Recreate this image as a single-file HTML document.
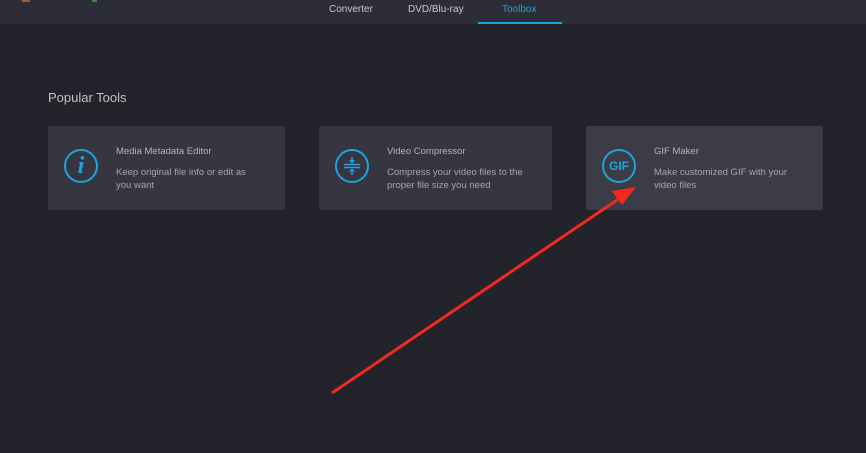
<!DOCTYPE html>
<html><head><style>
body{margin:0;width:866px;height:453px;background:#22232b;font-family:"Liberation Sans",sans-serif;position:relative;overflow:hidden}
.hdr{position:absolute;left:0;top:0;width:866px;height:24px;background:#2c2d37}
.tab{position:absolute;top:4px;font-size:10px;color:#c8c8cc}
.card{position:absolute;top:126px;height:84px;background:#35363f;border-radius:2px}
.t{position:absolute;left:68px;top:20px;font-size:9.5px;color:#b4b4ba}
.d{position:absolute;left:68px;top:40px;font-size:9.5px;color:#a6a6ac;line-height:13px;width:150px}
.ic{position:absolute;left:16px;top:23px;width:34px;height:34px;border:2px solid #1ea3e0;border-radius:50%;box-sizing:border-box;color:#1ea3e0;text-align:center}
</style></head><body>
<div class="hdr"></div>
<div style="position:absolute;left:22px;top:0;width:8px;height:2px;background:#a06030"></div>
<div style="position:absolute;left:92px;top:0;width:5px;height:2px;background:#3a8a3a"></div>
<div class="tab" style="left:329px">Converter</div>
<div class="tab" style="left:408px">DVD/Blu-ray</div>
<div class="tab" style="left:502px;color:#1ea3e0">Toolbox</div>
<div style="position:absolute;left:478px;top:22px;width:84px;height:2px;background:#1ea3e0"></div>
<div style="position:absolute;left:48px;top:90px;font-size:13px;color:#c0c0c6">Popular Tools</div>
<div class="card" style="left:48px;width:237px"><div class="ic" style="font:italic bold 24px 'Liberation Serif',serif;line-height:30px">i</div><div class="t">Media Metadata Editor</div><div class="d" style="width:145px">Keep original file info or edit as you want</div></div>
<div class="card" style="left:319px;width:233px"><div class="ic"><svg width="30" height="30" viewBox="0 0 30 30"><g stroke="#1ea3e0" stroke-width="1.5" fill="none"><path d="M7 13.5H23M7 16.5H23M15 6V11M12.5 9L15 11.5L17.5 9M15 24V19M12.5 21L15 18.5L17.5 21"/></g></svg></div><div class="t">Video Compressor</div><div class="d">Compress your video files to the proper file size you need</div></div>
<div class="card" style="left:586px;width:237px;background:#3b3c45"><div class="ic" style="font-size:12px;font-weight:bold;line-height:30px">GIF</div><div class="t">GIF Maker</div><div class="d">Make customized GIF with your video files</div></div>
<svg style="position:absolute;left:0;top:0" width="866" height="453"><line x1="332" y1="393" x2="620" y2="198" stroke="#f02a1e" stroke-width="3"/><polygon points="636,187 612,191 622,205" fill="#f02a1e"/></svg>
</body></html>
